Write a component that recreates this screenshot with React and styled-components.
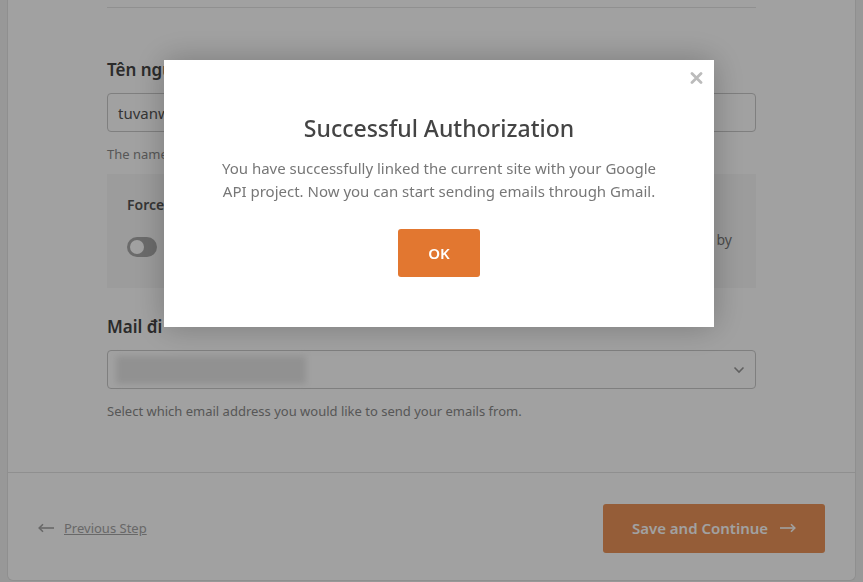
import React from "react";
import styled, { createGlobalStyle } from "styled-components";

const GlobalStyle = createGlobalStyle`
  html, body {
    margin: 0;
    padding: 0;
    background: #f1f1f1;
    font-family: "Noto Sans", "Open Sans", sans-serif;
    overflow: hidden;
  }
`;

const Page = styled.div`
  height: 582px;
  padding: 0 7px;
  box-sizing: border-box;
`;

const Card = styled.div`
  background: #fff;
  height: 581px;
  border: 1px solid #e2e2e2;
  border-top: 0;
  border-radius: 0 0 6px 6px;
  display: flex;
  flex-direction: column;
  box-sizing: border-box;
`;

const Body = styled.div`
  padding: 7px 99px 0 99px;
  height: 473px;
  box-sizing: border-box;
  border-bottom: 1px solid #e2e2e2;
`;

const Divider = styled.div`
  height: 1px;
  background: #e4e4e4;
  margin-bottom: 50px;
`;

const Label = styled.div`
  font-size: 17px;
  font-weight: 600;
  color: #444;
  margin-bottom: 11px;
  line-height: 24px;
`;

const Input = styled.div`
  height: 39px;
  border: 1px solid #c9c9c9;
  border-radius: 4px;
  box-sizing: border-box;
  display: flex;
  align-items: center;
  justify-content: space-between;
  padding: 0 10px;
  font-size: 15px;
  color: #555;
`;

const Help = styled.div`
  font-size: 13px;
  color: #8a8a8a;
  margin-top: 13px;
  line-height: 18px;
`;

const OptionBox = styled.div`
  margin-top: 11px;
  background: #f7f7f7;
  height: 114px;
  padding: 22px 24px 22px 20px;
  box-sizing: border-box;
`;

const OptionTitle = styled.div`
  font-size: 14px;
  font-weight: 600;
  color: #555;
  line-height: 18px;
`;

const OptionRow = styled.div`
  display: flex;
  align-items: flex-start;
  gap: 18px;
  margin-top: 12px;
`;

const Toggle = styled.div`
  width: 30px;
  height: 20px;
  border-radius: 10px;
  background: #aaa;
  position: relative;
  flex: none;
  margin-top: 11px;
  &::after {
    content: "";
    position: absolute;
    left: 3px;
    top: 3px;
    width: 14px;
    height: 14px;
    border-radius: 50%;
    background: #fff;
  }
`;

const OptionText = styled.div`
  flex: 1;
  min-width: 0;
  padding-top: 3px;
  font-size: 14px;
  color: #777;
  line-height: 22px;
`;

const OptionLine = styled.div`
  white-space: nowrap;
  text-align: ${(p) => (p.$end ? "right" : "left")};
`;

const Section = styled.div`
  margin-top: ${(p) => p.$gap}px;
`;

const Blurred = styled.span`
  display: inline-block;
  width: 190px;
  height: 28px;
  background: #e6e6e6;
  filter: blur(3px);
  margin-left: -2px;
`;

const Footer = styled.div`
  flex: 1;
  display: flex;
  align-items: center;
  justify-content: space-between;
  padding: 3px 30px 0 30px;
`;

const Back = styled.a`
  display: flex;
  align-items: center;
  gap: 10px;
  font-size: 13px;
  color: #a5a5a5;
  span {
    text-decoration: underline;
  }
`;

const PrimaryButton = styled.button`
  border: 0;
  border-radius: 3px;
  background: ${(p) => p.$bg};
  color: #fff;
  font-family: inherit;
  font-weight: 600;
  font-size: ${(p) => p.$size}px;
  width: ${(p) => p.$w}px;
  height: ${(p) => p.$h}px;
  display: flex;
  align-items: center;
  justify-content: center;
  gap: 12px;
  cursor: pointer;
`;

const Overlay = styled.div`
  position: fixed;
  inset: 0;
  background: rgba(0, 0, 0, 0.37);
`;

const Modal = styled.div`
  position: fixed;
  left: 164px;
  top: 60px;
  width: 550px;
  height: 267px;
  background: #fff;
  box-shadow: 0 0 30px rgba(0, 0, 0, 0.25);
  box-sizing: border-box;
  padding: 51px 30px 0;
  text-align: center;
  display: flex;
  flex-direction: column;
  align-items: center;
`;

const Close = styled.button`
  position: absolute;
  top: 12px;
  right: 11px;
  border: 0;
  background: none;
  padding: 0;
  line-height: 0;
  cursor: pointer;
`;

const Title = styled.h2`
  margin: 0;
  font-size: 23px;
  font-weight: 500;
  color: #444;
  line-height: 34px;
`;

const Message = styled.p`
  margin: 12px 0 26px;
  font-size: 15px;
  color: #777;
  line-height: 23px;
`;

const Arrow = ({ left, color }) => (
  <svg width="16" height="10" viewBox="0 0 16 10" fill="none" stroke={color} strokeWidth="1.6">
    {left ? (
      <>
        <path d="M16 5H1.5" />
        <path d="M5 1.2L1.2 5L5 8.8" />
      </>
    ) : (
      <>
        <path d="M0 5H14.5" />
        <path d="M11 1.2L14.8 5L11 8.8" />
      </>
    )}
  </svg>
);

const Chevron = () => (
  <svg width="12" height="8" viewBox="0 0 12 8" fill="none" stroke="#999" strokeWidth="1.6">
    <path d="M1.5 1.5L6 6L10.5 1.5" />
  </svg>
);

const CloseIcon = () => (
  <svg width="13" height="12" viewBox="0 0 13 12" fill="none" stroke="#bbb" strokeWidth="2.8" strokeLinecap="round">
    <path d="M2 1.5L11 10.5M11 1.5L2 10.5" />
  </svg>
);

export default function App() {
  return (
    <>
      <GlobalStyle />
      <Page>
        <Card>
          <Body>
            <Divider />
            <Label>Tên người gửi</Label>
            <Input>tuvanwebsite</Input>
            <Help>The name that emails are sent from.</Help>
            <OptionBox>
              <OptionTitle>Force From Name</OptionTitle>
              <OptionRow>
                <Toggle />
                <OptionText>
                  <OptionLine $end>The From Name above will be used for all emails, ignoring values set by</OptionLine>
                  <OptionLine>other plugins.</OptionLine>
                </OptionText>
              </OptionRow>
            </OptionBox>
            <Section $gap={27}>
              <Label>Mail đi</Label>
              <Input>
                <Blurred />
                <Chevron />
              </Input>
              <Help>Select which email address you would like to send your emails from.</Help>
            </Section>
          </Body>
          <Footer>
            <Back>
              <Arrow left color="#a5a5a5" />
              <span>Previous Step</span>
            </Back>
            <PrimaryButton $bg="#ec9459" $w={222} $h={49} $size={15}>
              Save and Continue
              <Arrow color="#fff" />
            </PrimaryButton>
          </Footer>
        </Card>
      </Page>
      <Overlay />
      <Modal>
        <Close>
          <CloseIcon />
        </Close>
        <Title>Successful Authorization</Title>
        <Message>
          You have successfully linked the current site with your Google
          <br />
          API project. Now you can start sending emails through Gmail.
        </Message>
        <PrimaryButton $bg="#e27730" $w={82} $h={48} $size={15}>
          OK
        </PrimaryButton>
      </Modal>
    </>
  );
}
